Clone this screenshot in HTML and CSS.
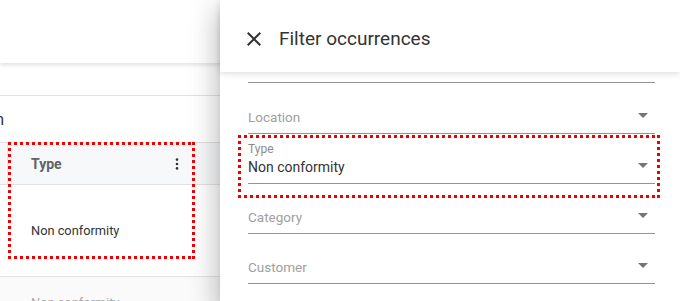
FILE: index.html
```html
<!DOCTYPE html>
<html>
<head>
<meta charset="utf-8">
<link rel="stylesheet" href="styles.css">
</head>
<body>
<div class="page">
  <div class="topbar"></div>
  <div class="toolbar"></div>
  <div class="section">
    <div class="section-title"><span>Occurrence information</span></div>
  </div>
  <div class="table">
    <div class="trow thead">
      <div class="cell prev"></div>
      <div class="cell type-col">
        <span class="th-label">Type</span>
        <svg class="kebab" width="4" height="12" viewBox="0 0 4 12"><circle cx="2" cy="1.6" r="1.3"/><circle cx="2" cy="6" r="1.3"/><circle cx="2" cy="10.4" r="1.3"/></svg>
      </div>
      <div class="cell next"></div>
    </div>
    <div class="trow tbody">
      <div class="cell prev"></div>
      <div class="cell type-col"><span>Non conformity</span></div>
      <div class="cell next"></div>
    </div>
    <div class="trow tbody alt">
      <div class="cell prev"></div>
      <div class="cell type-col faded"><span>Non conformity</span></div>
      <div class="cell next"></div>
    </div>
  </div>
</div>

<aside class="drawer">
  <header class="drawer-head">
    <svg class="close" width="24" height="24" viewBox="0 0 24 24"><path d="M19 6.41 17.59 5 12 10.59 6.41 5 5 6.41 10.59 12 5 17.59 6.41 19 12 13.41 17.59 19 19 17.59 13.41 12z"/></svg>
    <h1 class="title">Filter occurrences</h1>
  </header>
  <div class="drawer-body">
    <div class="cut-field"></div>
    <div class="fields">
      <div class="field">
        <div class="field-text"><span class="placeholder">Location</span></div>
        <svg class="arrow" width="24" height="24" viewBox="0 0 24 24"><path d="M7 10l5 5 5-5z"/></svg>
      </div>
      <div class="field">
        <div class="field-text">
          <span class="label">Type</span>
          <span class="value">Non conformity</span>
        </div>
        <svg class="arrow" width="24" height="24" viewBox="0 0 24 24"><path d="M7 10l5 5 5-5z"/></svg>
      </div>
      <div class="field">
        <div class="field-text"><span class="placeholder">Category</span></div>
        <svg class="arrow" width="24" height="24" viewBox="0 0 24 24"><path d="M7 10l5 5 5-5z"/></svg>
      </div>
      <div class="field">
        <div class="field-text"><span class="placeholder">Customer</span></div>
        <svg class="arrow" width="24" height="24" viewBox="0 0 24 24"><path d="M7 10l5 5 5-5z"/></svg>
      </div>
    </div>
  </div>
</aside>

<div class="mark mark-left"></div>
<div class="mark mark-right"></div>
</body>
</html>
```

FILE: styles.css
```css
* { box-sizing: border-box; }
html, body {
  margin: 0;
  padding: 0;
  width: 680px;
  height: 301px;
  overflow: hidden;
  background: #fff;
  font-family: Roboto, "Liberation Sans", sans-serif;
}

.page {
  display: flex;
  flex-direction: column;
  width: 680px;
  height: 301px;
  overflow: hidden;
}

.topbar {
  height: 63px;
  flex: none;
  background: #fff;
  box-shadow: 0 2px 4px rgba(0, 0, 0, 0.12);
  position: relative;
  z-index: 1;
}

.toolbar {
  height: 33px;
  flex: none;
  border-bottom: 1px solid #e2e2e2;
}

.section {
  height: 47px;
  flex: none;
  display: flex;
  align-items: center;
  border-bottom: 1px solid #e2e2e2;
}

.section-title {
  width: 4px;
  display: flex;
  justify-content: flex-end;
  white-space: nowrap;
  font-size: 16px;
  color: #333;
}

.table { display: flex; flex-direction: column; flex: none; }

.trow {
  display: grid;
  grid-template-columns: 8px 185px 1fr;
  border-bottom: 1px solid #e2e2e2;
}

.thead {
  height: 42px;
  background: #f7f8f9;
}

.tbody { height: 92px; }
.tbody.alt { background: #fafafa; }

.cell {
  display: flex;
  align-items: center;
}

.type-col {
  padding: 0 14px 0 23px;
  justify-content: space-between;
  font-size: 12.8px;
  color: #333;
}

.thead .cell.prev { border-right: 1px solid #e6e6e6; }

.th-label {
  font-size: 14px;
  font-weight: 700;
  color: #5f6368;
}

.kebab { fill: #333; }

.faded {
  align-items: flex-start;
  padding-top: 18px;
  color: #aaa;
}

/* Drawer */
.drawer {
  position: absolute;
  top: 0;
  left: 220px;
  width: 460px;
  height: 301px;
  background: #fff;
  display: flex;
  flex-direction: column;
  z-index: 5;
  box-shadow: 0 8px 10px -5px rgba(0,0,0,.2), 0 16px 24px 2px rgba(0,0,0,.14), 0 6px 30px 5px rgba(0,0,0,.12);
}

.drawer-head {
  height: 72px;
  flex: none;
  display: flex;
  align-items: center;
  padding: 5px 0 0 22px;
  gap: 13px;
  background: #fff;
  position: relative;
  z-index: 2;
  box-shadow: 0 2px 6px rgba(0, 0, 0, 0.13);
}

.close { fill: #333; flex: none; }

.title {
  margin: 0;
  font-size: 19px;
  font-weight: 400;
  color: #333;
}

.drawer-body {
  flex: 1;
  overflow: hidden;
  padding: 0 25px 0 28px;
}

.cut-field {
  height: 11px;
  border-bottom: 1px solid #949494;
}

.fields {
  display: flex;
  flex-direction: column;
  padding-top: 1px;
}

.field {
  height: 50px;
  display: flex;
  align-items: flex-end;
  justify-content: space-between;
  padding-bottom: 6px;
  border-bottom: 1px solid #949494;
}

.field-text {
  display: flex;
  flex-direction: column;
}

.placeholder {
  font-size: 13.5px;
  line-height: 20px;
  color: #a0a0a0;
}

.label {
  font-size: 12px;
  line-height: 14px;
  color: #8c8c8c;
  margin-bottom: 1px;
}

.value {
  font-size: 14px;
  line-height: 20px;
  color: #333;
}

.arrow { fill: #757575; flex: none; margin-bottom: 0; }

/* Annotation marks */
.mark {
  position: absolute;
  z-index: 10;
  background:
    repeating-linear-gradient(90deg, #ee0000 0 3px, transparent 3px 6px) left top / 100% 3px no-repeat,
    repeating-linear-gradient(90deg, #ee0000 0 3px, transparent 3px 6px) left bottom / 100% 3px no-repeat,
    repeating-linear-gradient(180deg, #ee0000 0 3px, transparent 3px 6px) left top / 3px 100% no-repeat,
    repeating-linear-gradient(180deg, #ee0000 0 3px, transparent 3px 6px) right top / 3px 100% no-repeat;
}

.mark-left {
  left: 8px;
  top: 142px;
  width: 187px;
  height: 117px;
}

.mark-right {
  left: 238px;
  top: 135px;
  width: 422px;
  height: 63px;
}
```
